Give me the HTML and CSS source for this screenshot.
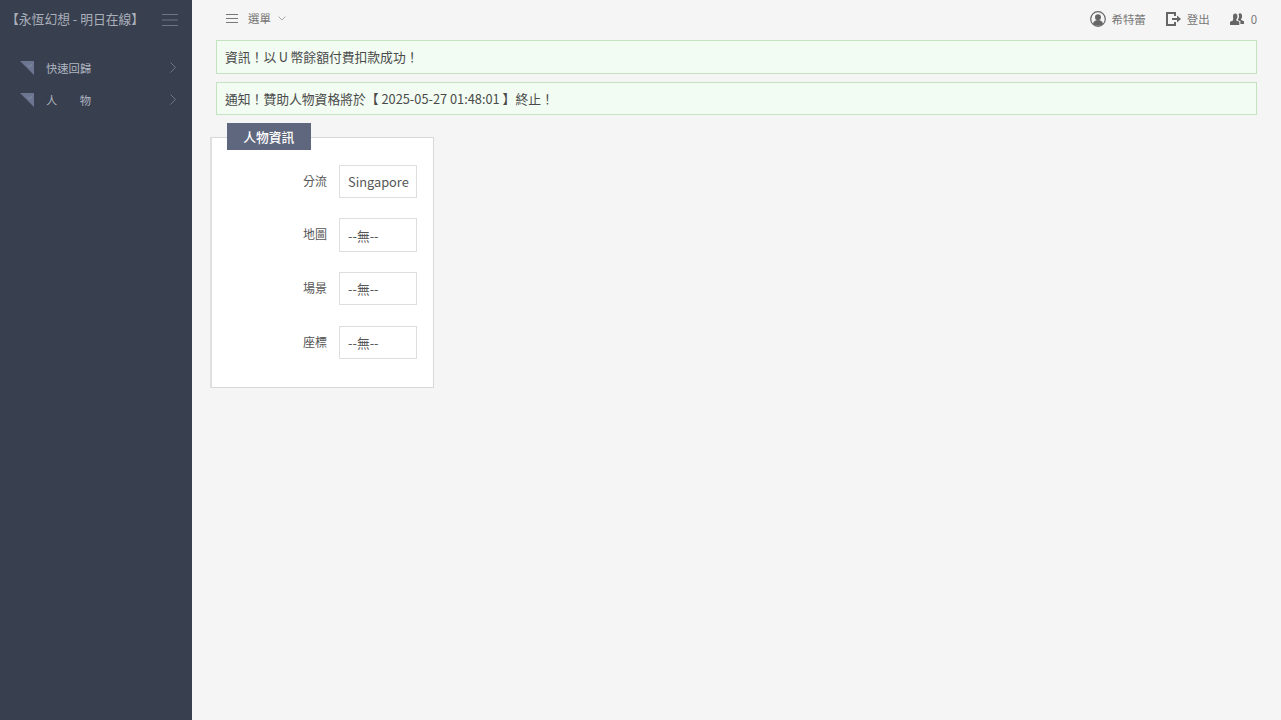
FILE: index.html
```html
<!DOCTYPE html>
<html lang="zh-Hant">
<head>
<meta charset="utf-8">
<title>永恆幻想</title>
<link rel="stylesheet" href="styles.css">
</head>
<body>
<div class="app">
  <aside class="sidebar">
    <div class="brand">
      <span class="brand-name">【永恆幻想 - 明日在線】</span>
      <svg class="burger" width="16" height="12" viewBox="0 0 16 12"><path d="M0 .5h16M0 6h16M0 11.500h16" stroke="#6d7686" fill="none"/></svg>
    </div>
    <nav class="nav">
      <a class="nav-item">
        <svg class="corner" width="14" height="14" viewBox="0 0 14 14"><path d="M0 0h14v14z" fill="#6d7690"/><path d="M8 4l2 2 2-3" stroke="#8a93a6" fill="none" stroke-width=".8"/></svg>
        <span class="nav-text">快速回歸</span>
        <svg class="chev" width="6" height="11" viewBox="0 0 6 11"><path d="M.5.5l5 5-5 5" stroke="#6d7686" fill="none"/></svg>
      </a>
      <a class="nav-item">
        <svg class="corner" width="14" height="14" viewBox="0 0 14 14"><path d="M0 0h14v14z" fill="#6d7690"/><path d="M8 4l2 2 2-3" stroke="#8a93a6" fill="none" stroke-width=".8"/></svg>
        <span class="nav-text nav-wide"><span>人</span><span>物</span></span>
        <svg class="chev" width="6" height="11" viewBox="0 0 6 11"><path d="M.5.5l5 5-5 5" stroke="#6d7686" fill="none"/></svg>
      </a>
    </nav>
  </aside>
  <main class="main">
    <header class="topbar">
      <div class="top-left">
        <svg width="12" height="9" viewBox="0 0 12 9"><path d="M0 .5h12M0 4.500h12M0 8.500h12" stroke="#777" fill="none"/></svg>
        <span class="top-menu">選單</span>
        <svg class="top-caret" width="8" height="5" viewBox="0 0 8 5"><path d="M.5.500l3.500 3.500 3.500-3.500" stroke="#aaa" fill="none"/></svg>
      </div>
      <div class="top-right">
        <span class="top-link">
          <svg width="16" height="16" viewBox="0 0 16 16"><circle cx="8" cy="8" r="7.300" fill="none" stroke="#666" stroke-width="1.200"/><circle cx="8" cy="6.200" r="3" fill="#666"/><path d="M3 13c.5-3 2.500-4 5-4s4.500 1 5 4c-1.500 1.200-3 1.700-5 1.700S4.500 14.200 3 13z" fill="#666"/></svg>
          <span>希特蕾</span>
        </span>
        <span class="top-link">
          <svg width="15" height="14" viewBox="0 0 15 14"><path d="M9 4V1H1v12h8v-3" fill="none" stroke="#666" stroke-width="2"/><path d="M6 6h5V3.500L15 7l-4 3.500V8H6z" fill="#666"/></svg>
          <span>登出</span>
        </span>
        <span class="top-link top-count">
          <svg width="14" height="13" viewBox="0 0 14 13"><path d="M3 3.500C3 1.500 3.800.5 5.200.5S7.400 1.500 7.400 3.500c0 1.300-.5 2.400-1.100 3v1l3 1.200V12H0V8.700l3-1.200v-1C3.500 5.900 3 4.800 3 3.500z" fill="#666"/><path d="M8.500 1.200C8.900.6 9.400.3 10 .3c1.400 0 2.100 1 2.100 2.900 0 1.200-.4 2.200-1 2.900v.9L14 8.300V11h-3.600V8.300L8 7.200V6.300c.6-.7 1-1.800 1-3 0-.8-.2-1.500-.5-2.100z" fill="#666"/></svg>
          <span>0</span>
        </span>
      </div>
    </header>
    <section class="alerts">
      <div class="alert">資訊！以&#8201;U&#8201;幣餘額付費扣款成功！</div>
      <div class="alert">通知！贊助人物資格將於【 2025-05-27 01:48:01 】終止！</div>
    </section>
    <section class="panel">
      <h2 class="panel-title">人物資訊</h2>
      <div class="row"><label class="row-label">分流</label><div class="field">Singapore</div></div>
      <div class="row"><label class="row-label">地圖</label><div class="field">--無--</div></div>
      <div class="row"><label class="row-label">場景</label><div class="field">--無--</div></div>
      <div class="row"><label class="row-label">座標</label><div class="field">--無--</div></div>
    </section>
  </main>
</div>
</body>
</html>
```
FILE: styles.css
```css
* { box-sizing: border-box; }
html, body { margin: 0; height: 100%; }
body {
  font-family: "Noto Sans CJK TC", "Noto Sans", sans-serif;
  font-size: 12.800px;
  color: #555;
  background: #f5f5f5;
  overflow: hidden;
}
.app { display: flex; height: 720px; }
.sidebar { width: 192px; flex: none; background: #383f4e; }
.brand {
  height: 38px;
  display: flex;
  align-items: center;
  justify-content: space-between;
  padding: 0 14px 2px 8px;
  color: #aab0bb;
  font-size: 12.800px;
}
.brand-name { white-space: nowrap; margin-left: -2px; }
.burger { margin-top: 3px; }
.nav { margin-top: 14px; }
.nav-item {
  height: 32px;
  display: flex;
  align-items: center;
  padding: 0 16px 0 20px;
  color: #b0b6c2;
  font-size: 11.300px;
}
.corner { margin-top: -1px; flex: none; }
.nav-text { margin-left: 12px; width: 45px; white-space: nowrap; }
.nav-wide { display: flex; justify-content: space-between; }
.chev { margin-left: auto; margin-top: -2px; }
.main { flex: 1; min-width: 0; padding: 0 24px 0 19px; }
.topbar {
  height: 40px;
  display: flex;
  align-items: center;
  justify-content: space-between;
  font-size: 11.430px;
  color: #777;
  margin-top: -1px;
  padding-left: 15px;
}
.top-left { display: flex; align-items: center; gap: 10px; padding-bottom: 2px; }
.top-caret { margin-left: -3px; }
.top-right { display: flex; align-items: center; gap: 20px; }
.top-link { display: flex; align-items: center; gap: 6px; }
.top-count { gap: 7px; }
.alerts { margin-left: 5px; margin-top: 1px; }
.alert {
  height: 33.500px;
  margin-bottom: 8px;
  padding: 0 8px;
  display: flex;
  align-items: center;
  background: #f2fcf3;
  border: 1px solid #c4e3c0;
  color: #4a4a4a;
  font-size: 12.800px;
  white-space: pre;
}
.panel {
  position: relative;
  width: 224px;
  height: 251px;
  margin: 22px 0 0 -1px;
  background: #fff;
  border: 1px solid #d8d8d8;
  border-left: 2px solid #e0e0e0;
  padding-top: 26.800px;
}
.panel-title {
  position: absolute;
  top: -15px;
  left: 15px;
  width: 83.500px;
  height: 27px;
  margin: 0;
  display: flex;
  align-items: center;
  justify-content: center;
  background: #5f677e;
  color: #fff;
  font-size: 12.800px;
  font-weight: 500;
}
.row { display: flex; margin-bottom: 20.100px; height: 33.500px; }
.row-label {
  width: 115px;
  text-align: right;
  font-size: 12px;
  color: #555;
  line-height: 32px;
}
.field {
  margin-left: 12px;
  width: 78px;
  height: 33.500px;
  border: 1px solid #dedede;
  padding: 0 8px;
  display: flex;
  align-items: center;
  font-size: 12.800px;
  color: #555;
  white-space: nowrap;
  background: #fff;
}
```
